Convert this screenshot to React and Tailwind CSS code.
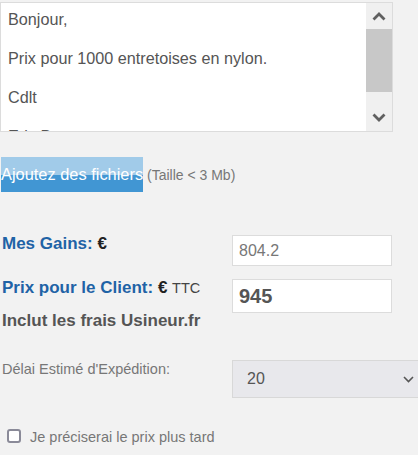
export default function App() {
  return (
    <div className="w-[418px] h-[455px] overflow-hidden bg-[#f2f2f2] font-['Liberation_Sans',Arial,sans-serif]">
      {/* Message box */}
      <div className="mt-[2px] w-[393px] h-[130px] flex border border-[#dcdcdc] bg-white">
        <div className="flex-1 overflow-hidden pl-[7px] pt-[7px] text-[16.2px] leading-[19.5px] text-[#555] whitespace-pre-line">
          {'Bonjour,\n\nPrix pour 1000 entretoises en nylon.\n\nCdlt\n\nEric B.'}
        </div>
        <div className="w-[26px] flex flex-col bg-[#f0f0f0]">
          <div className="h-[26px] flex items-center justify-center">
            <svg width="14" height="9" viewBox="0 0 14 9">
              <path d="M1.5 7.5 L7 2 L12.5 7.5" fill="none" stroke="#606060" strokeWidth="2.8" />
            </svg>
          </div>
          <div className="h-[63px] bg-[#c8c8c8]" />
          <div className="flex-1 flex items-center justify-center pt-[12px]">
            <svg width="14" height="9" viewBox="0 0 14 9">
              <path d="M1.5 1.5 L7 7 L12.5 1.5" fill="none" stroke="#606060" strokeWidth="2.8" />
            </svg>
          </div>
        </div>
      </div>

      {/* Upload */}
      <div className="mt-[25px] flex items-center">
        <div className="ml-[1px] w-[142px] h-[35px] flex items-center bg-[linear-gradient(#a1cbe9_50%,#4196d3_50%)] text-white text-[16.4px] whitespace-nowrap">
          Ajoutez des fichiers
        </div>
        <span className="ml-[4px] mt-[2px] text-[14px] text-[#777]">(Taille &lt; 3 Mb)</span>
      </div>

      {/* Mes Gains */}
      <div className="mt-[43px] flex items-start">
        <div className="w-[232px] shrink-0 pl-[2px] text-[17px] leading-[18px] font-bold">
          <span className="text-[#1f63a6]">Mes Gains:</span> <span className="text-[#222]">€</span>
        </div>
        <div className="w-[160px] h-[31px] flex items-center pl-[6px] border border-[#dcdcdc] bg-white text-[16px] text-[#777]">
          804.2
        </div>
      </div>

      {/* Prix client */}
      <div className="mt-[13px] flex items-start">
        <div className="w-[232px] shrink-0 pl-[2px]">
          <div className="text-[17px] leading-[18px] font-bold whitespace-nowrap">
            <span className="text-[#1f63a6]">Prix pour le Client:</span>{' '}
            <span className="text-[#222]">€</span>{' '}
            <span className="font-normal text-[14.5px] text-[#444]">TTC</span>
          </div>
          <div className="mt-[15px] text-[17px] leading-[18px] font-bold text-[#555]">Inclut les frais Usineur.fr</div>
        </div>
        <div className="w-[160px] h-[34px] flex items-center pl-[6px] border border-[#dcdcdc] bg-white text-[20px] font-bold text-[#555]">
          945
        </div>
      </div>

      {/* Délai */}
      <div className="mt-[30px] flex items-start">
        <div className="w-[232px] shrink-0 pl-[2px] text-[14.5px] leading-[18px] text-[#777]">Délai Estimé d'Expédition:</div>
        <div className="relative w-[200px] h-[38px] shrink-0 flex items-center pl-[14px] border border-[#d8d8d8] bg-[#e8e8ec] text-[16px] text-[#555]">
          20
          <svg className="absolute left-[170px] top-[15px]" width="11" height="7" viewBox="0 0 11 7">
            <path d="M1 1 L5.5 5.5 L10 1" fill="none" stroke="#555" strokeWidth="1.6" />
          </svg>
        </div>
      </div>

      {/* Checkbox */}
      <label className="mt-[29px] flex items-center h-[18px]">
        <span className="ml-[7px] w-[14px] h-[14px] shrink-0 rounded-[3px] border-2 border-[#8a8a98] bg-white" />
        <span className="ml-[9px] mt-[3px] text-[14.5px] text-[#777]">Je préciserai le prix plus tard</span>
      </label>
    </div>
  )
}
